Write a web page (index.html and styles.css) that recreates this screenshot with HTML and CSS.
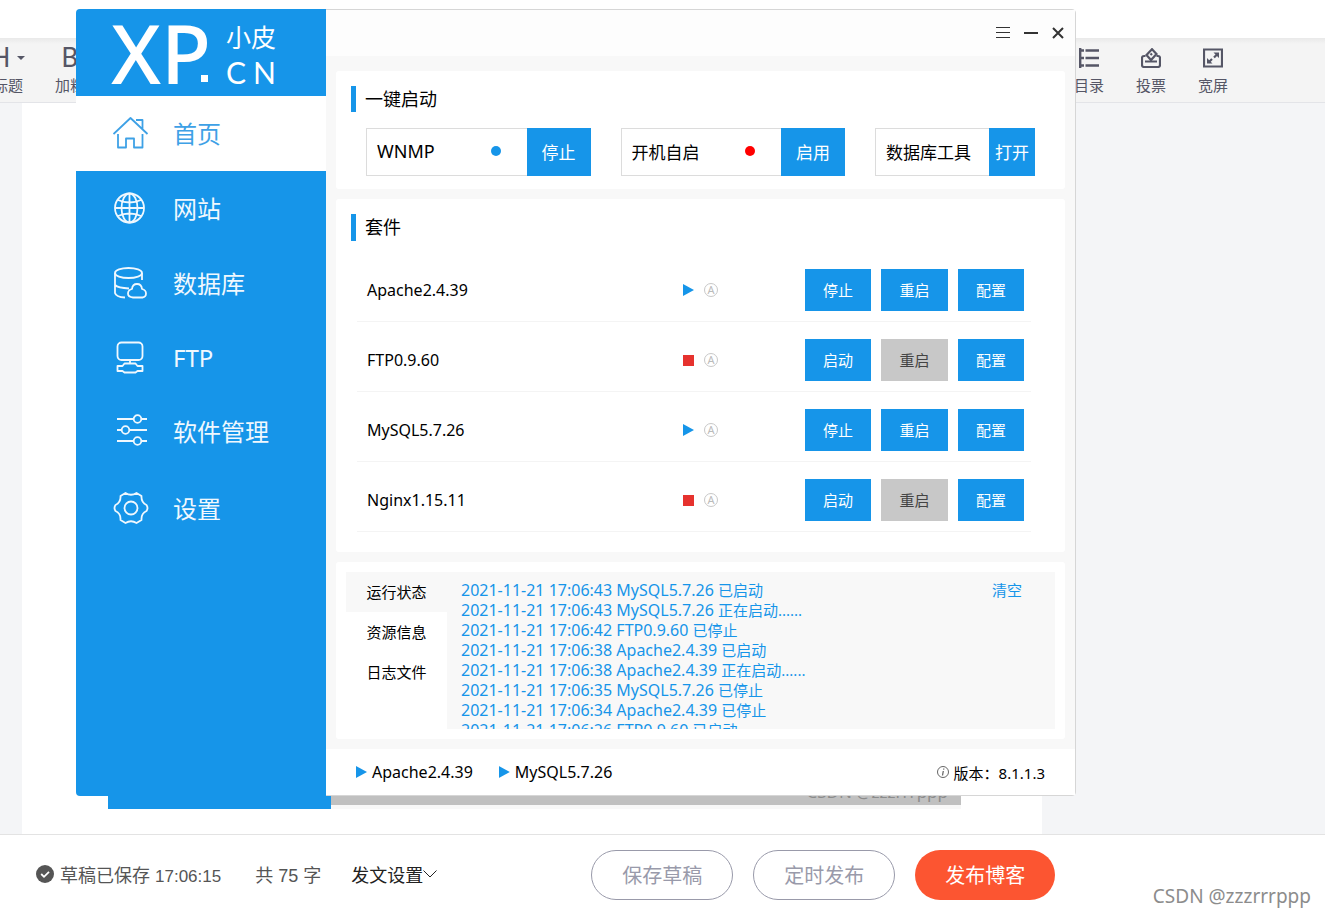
FILE: index.html
```html
<!DOCTYPE html>
<html lang="zh-CN">
<head>
<meta charset="utf-8">
<title>小皮面板</title>
<link rel="stylesheet" href="styles.css">
</head>
<body>
<div class="editor">
  <div class="editor-head"></div>
  <div class="toolbar">
    <button class="tool" type="button"><span class="tool-icon tool-letter">H<svg width="8" height="4" viewBox="0 0 8 4"><path d="M0 0h8L4 4z" fill="currentColor"/></svg></span><span>标题</span></button>
    <button class="tool" type="button"><span class="tool-icon tool-letter">B</span><span>加粗</span></button>
    <span class="spacer"></span>
    <button class="tool" type="button"><span class="tool-icon"><svg width="20" height="20" viewBox="0 0 20 20" fill="none" stroke="currentColor" stroke-width="2.4"><path d="M1.200 0v20M1 2.500h4M1 10h4M1 17.500h4M6.500 2.500H20M6.500 10H20M6.500 17.500H20"/></svg></span><span>目录</span></button>
    <button class="tool" type="button"><span class="tool-icon"><svg width="20" height="20" viewBox="0 0 20 20" fill="none" stroke="currentColor" stroke-width="2.2"><path d="M4.500 8H3Q1 8 1 10v7q0 2 2 2h14q2 0 2-2v-7q0-2-2-2h-1.500M4 13.500h12"/><path d="M5.500 7 11 1.200 15.500 6 10 12Z"/><path d="M9.500 7l1.500-1.500"/></svg></span><span>投票</span></button>
    <button class="tool" type="button"><span class="tool-icon"><svg width="20" height="20" viewBox="0 0 20 20" fill="none" stroke="currentColor" stroke-width="2.2"><path d="M1 1.500h18v17H1zM11 9.500l3.500-3.500M9 11l-3.500 3.500"/><path d="M10.500 4.500H16V10zM4 10v5.500h5.500z" fill="currentColor" stroke="none"/></svg></span><span>宽屏</span></button>
  </div>
  <main class="canvas">
    <article class="doc">
      <div class="shot"><div class="shot-side"></div><div class="shot-body"><span>CSDN @zzzrrrppp</span></div></div>
    </article>
  </main>
  <footer class="publish">
    <div class="status">
      <svg width="18" height="18" viewBox="0 0 18 18"><circle cx="9" cy="9" r="9" fill="#555"/><path d="M5.200 9l2.800 2.800 5-5" fill="none" stroke="#fff" stroke-width="1.800"/></svg>
      <span>草稿已保存 <time>17:06:15</time></span>
    </div>
    <span class="count">共 75 字</span>
    <button class="settings" type="button" aria-haspopup="true">发文设置<svg width="14" height="8" viewBox="0 0 14 8" fill="none" stroke="#222"><path d="M.5.5 7 7 13.500.5"/></svg></button>
    <div class="actions">
      <button class="pill" type="button">保存草稿</button>
      <button class="pill" type="button">定时发布</button>
      <button class="pill primary" type="button">发布博客</button>
    </div>
    <span class="mark">CSDN @zzzrrrppp</span>
  </footer>
</div>

<div class="window">
  <aside class="side">
    <div class="logo">
      <span class="logo-xp">XP</span><span class="logo-dot"></span>
      <span class="logo-name"><span class="logo-row"><b>小</b><b>皮</b></span><span class="logo-row logo-cn"><b>C</b><b>N</b></span></span>
    </div>
    <nav class="nav">
      <a class="active" href="#home"><svg width="36" height="34" viewBox="0 0 36 34"><path d="M.5 18 17.500 2l17 16M23 4h6.500v9M5 18v13.500h8v-9h8v9h8.500V18"/></svg>首页</a>
      <a href="#site"><svg width="36" height="34" viewBox="0 0 36 34"><circle cx="16.500" cy="17" r="14.500"/><ellipse cx="16.500" cy="17" rx="8" ry="14.500"/><path d="M16.500 2.500v29M2 17h29M5 9q11.500 5 23 0M5 25q11.500-5 23 0"/></svg>网站</a>
      <a href="#db"><svg width="36" height="34" viewBox="0 0 36 34"><ellipse cx="15.500" cy="7" rx="13.500" ry="5"/><path d="M2 7v20q1 4 10 4.500M29 7v7M2 19q3 3 14 3.500M20 31.500h9.500q3.500-.5 3.500-4t-4-4.500q-.5-5-5-5t-5 5q-4 1-4 4.500t5 4z"/></svg>数据库</a>
      <a href="#ftp"><svg width="36" height="34" viewBox="0 0 36 34"><rect x="4.500" y="1.500" width="25" height="17.500" rx="4"/><path d="M17 19v3.500M11.500 22.500h11l2 2.500h5v5h-5l-2 1.500h-11L9.500 30h-5v-5h5z"/></svg>FTP</a>
      <a class="soft" href="#soft"><svg width="36" height="34" viewBox="0 0 36 34"><path d="M4 6h16.500M28.500 6H34M4 17h4.500M16.500 17H34M4 28h16.500M28.500 28H34"/><circle cx="24.500" cy="6" r="3.800"/><circle cx="12.500" cy="17" r="3.800"/><circle cx="24.500" cy="28" r="3.800"/></svg>软件管理</a>
      <a class="set" href="#set"><svg width="36" height="34" viewBox="0 0 36 34"><circle cx="18" cy="17" r="6.500"/><path d="M12.500 2Q18 5.500 23.500 2l5 3q-.5 6.500 5 9 2 3 0 6-5.500 2.500-5 9l-5 3q-5.500-3.500-11 0l-5-3q.5-6.500-5-9-2-3 0-6 5.500-2.500 5-9z"/></svg>设置</a>
    </nav>
  </aside>
  <section class="panel">
    <header class="titlebar">
      <button type="button" aria-label="菜单"><svg width="14" height="12" viewBox="0 0 14 12" stroke="#333"><path d="M0 .5h14M0 5.500h14M0 10.500h14"/></svg></button>
      <button type="button" aria-label="最小化"><svg width="14" height="12" viewBox="0 0 14 12" stroke="#333" stroke-width="2"><path d="M0 6h14"/></svg></button>
      <button type="button" aria-label="关闭"><svg width="12" height="12" viewBox="0 0 12 12" stroke="#333" stroke-width="2"><path d="M1 1l10 10M11 1 1 11"/></svg></button>
    </header>
    <div class="cards">
      <section class="card">
        <h2>一键启动</h2>
        <div class="quick">
          <div class="group"><div class="field"><span class="latin">WNMP</span><i class="dot"></i></div><button type="button">停止</button></div>
          <div class="group"><div class="field"><span>开机自启</span><i class="dot red"></i></div><button type="button">启用</button></div>
          <div class="group tools"><div class="field"><span>数据库工具</span></div><button type="button">打开</button></div>
        </div>
      </section>
      <section class="card suite">
        <h2>套件</h2>
        <ul class="services">
          <li><span class="name">Apache2.4.39</span><i class="play"></i><i class="auto">A</i><span class="ops"><button type="button">停止</button><button type="button">重启</button><button type="button">配置</button></span></li>
          <li><span class="name">FTP0.9.60</span><i class="stop"></i><i class="auto">A</i><span class="ops"><button type="button">启动</button><button type="button" disabled>重启</button><button type="button">配置</button></span></li>
          <li><span class="name">MySQL5.7.26</span><i class="play"></i><i class="auto">A</i><span class="ops"><button type="button">停止</button><button type="button">重启</button><button type="button">配置</button></span></li>
          <li><span class="name">Nginx1.15.11</span><i class="stop"></i><i class="auto">A</i><span class="ops"><button type="button">启动</button><button type="button" disabled>重启</button><button type="button">配置</button></span></li>
        </ul>
      </section>
      <section class="card run">
        <div class="tabs"><button class="on" type="button">运行状态</button><button type="button">资源信息</button><button type="button">日志文件</button></div>
        <div class="log">
          <ol>
            <li>2021-11-21 17:06:43 MySQL5.7.26 <span>已启动</span></li>
            <li>2021-11-21 17:06:43 MySQL5.7.26 <span>正在启动......</span></li>
            <li>2021-11-21 17:06:42 FTP0.9.60 <span>已停止</span></li>
            <li>2021-11-21 17:06:38 Apache2.4.39 <span>已启动</span></li>
            <li>2021-11-21 17:06:38 Apache2.4.39 <span>正在启动......</span></li>
            <li>2021-11-21 17:06:35 MySQL5.7.26 <span>已停止</span></li>
            <li>2021-11-21 17:06:34 Apache2.4.39 <span>已停止</span></li>
            <li>2021-11-21 17:06:26 FTP0.9.60 <span>已启动</span></li>
          </ol>
          <button type="button">清空</button>
        </div>
      </section>
    </div>
    <footer class="bar">
      <span class="running"><i class="play"></i>Apache2.4.39</span>
      <span class="running"><i class="play"></i>MySQL5.7.26</span>
      <span class="version"><svg width="12" height="12" viewBox="0 0 12 12" fill="none" stroke="#666"><circle cx="6" cy="6" r="5.500"/><path d="M6.800 2.500l-.2 1.200M6.300 5 5.500 9.500" stroke-width="1.300"/></svg><span>版本：8.1.1.3</span></span>
    </footer>
  </section>
</div>
</body>
</html>
```
FILE: styles.css
```css
* { box-sizing: border-box; }
body { margin: 0; font-family: "Noto Sans", "Noto Sans CJK SC", sans-serif; color: #000; }
button { margin: 0; padding: 0; border: 0; background: none; font: inherit; color: inherit; }
h2, ul, ol { margin: 0; padding: 0; font-weight: 400; list-style: none; }
svg { flex: none; }
i, b { font-style: normal; font-weight: 400; }

.editor { display: flex; flex-direction: column; height: 100vh; min-height: 840px; overflow: hidden; font-family: "Liberation Sans", "Noto Sans CJK SC", sans-serif; background: #f4f5f7; }
.editor-head { flex: none; height: 38px; background: #fff; }
.toolbar { flex: none; display: flex; gap: 32px; height: 65px; padding: 8px 97px 0 0; margin-left: -7px; border-bottom: 1px solid #e3e4e8; background: linear-gradient(#e9e9e9, #f4f4f4 6px); font-size: 15px; color: #555666; }
.spacer { flex: 1; }
.tool { display: flex; flex-direction: column; align-items: center; width: 30px; gap: 6px; line-height: 20px; white-space: nowrap; }
.tool-icon { display: flex; align-items: center; justify-content: center; height: 24px; }
.tool-letter { gap: 7px; font-family: Roboto, sans-serif; font-size: 27px; }
.canvas { flex: 1; display: flex; min-height: 0; padding-left: 22px; }
.doc { display: flex; align-items: flex-end; width: 1020px; padding: 0 81px 25px 86px; background: #fff; }
.shot { flex: 1; display: flex; height: 60px; }
.shot-side { width: 223px; background: #1695e9; }
.shot-body { flex: 1; display: flex; align-items: flex-end; justify-content: flex-end; padding: 0 13px 1px 0; border-bottom: 4px solid #f8f8f8; background: #c0c0c0; color: #8c8c8c; font: 17px/24px "Noto Sans", sans-serif; }
.publish { flex: none; display: flex; align-items: center; height: 83px; padding: 0 14px 4px 36px; border-top: 1px solid #e3e3e3; background: #fff; font-size: 18px; color: #555; white-space: nowrap; }
.status { display: flex; align-items: center; gap: 6px; }
.status time { font-size: 17px; }
.count { margin: 0 30px 0 34px; }
.settings { display: flex; align-items: center; color: #222; }
.actions { display: flex; gap: 20px; margin-left: 154px; padding-top: 2px; font-size: 20px; }
.pill { width: 142px; height: 50px; padding-bottom: 2px; border: 1px solid #999aaa; border-radius: 25px; color: #999aaa; }
.primary { width: 140px; border: 0; background: #fc5531; color: #fff; }
.mark { align-self: flex-end; margin-left: auto; padding-bottom: 4px; font: 19px/26px "Noto Sans", sans-serif; color: #8c8c8c; }

.window { position: absolute; top: 9px; left: 76px; display: flex; width: 1000px; border-radius: 4px; overflow: hidden; }
.side { flex: none; width: 250px; background: #1695e9; color: #fff; }
.logo { display: flex; height: 87px; padding: 0 50px 0 35px; }
.logo-xp { font-size: 82px; line-height: 86px; font-weight: 500; }
.logo-dot { align-self: flex-end; flex: none; width: 7px; height: 7px; margin: 0 0 14px -10px; background: #fff; }
.logo-name { display: flex; flex-direction: column; width: 50px; margin-left: auto; padding-top: 11px; font-size: 25px; line-height: 34px; }
.logo-row { display: flex; justify-content: space-between; }
.logo-cn { font-family: Lato, sans-serif; font-size: 30px; line-height: 36px; }
.nav a { display: flex; align-items: center; gap: 24px; height: 75px; padding: 0 0 2px 37px; font-size: 24px; color: #f0f8fe; text-decoration: none; }
.nav .soft { height: 70px; }
.nav .set { height: 85px; }
.nav svg { fill: none; stroke: currentColor; stroke-width: 1.8; stroke-linejoin: round; }
.nav .active { background: #fff; color: #3ea1e6; }

.panel { flex: 1; display: flex; flex-direction: column; border: 1px solid #d6d6d6; border-left: 0; border-radius: 0 4px 4px 0; background: #f8f8f8; }
.titlebar { display: flex; align-items: center; justify-content: flex-end; gap: 14px; height: 46px; padding-right: 11px; background: #fdfdfd; }
.titlebar button { display: flex; }
.cards { display: flex; flex-direction: column; gap: 10px; padding: 15px 10px 10px; }
.card { padding: 15px 15px 13px; border-radius: 3px; background: #fff; }
.card h2 { padding-left: 9px; border-left: 5px solid #1695e9; font-size: 18px; line-height: 26px; }
.quick { display: flex; gap: 30px; padding: 16px 15px 0; font-size: 17px; }
.group { flex: 1; display: flex; height: 48px; }
.tools { flex: none; width: 160px; }
.field { flex: 1; display: flex; align-items: center; justify-content: space-between; padding: 0 26px 2px 10px; border: 1px solid #dcdcdc; border-right: 0; white-space: nowrap; }
.tools .field { padding-right: 10px; }
.latin { font-size: 18px; }
.dot { width: 10px; height: 10px; border-radius: 50%; background: #1695e9; }
.red { background: #f00; }
.group button { width: 64px; padding-bottom: 1px; background: #1695e9; color: #fff; }
.tools button { width: 46px; }
.suite { padding-bottom: 20px; }
.suite h2 { line-height: 27px; }
.services { padding: 11px 19px 0 6px; }
.services li { display: flex; align-items: center; height: 70px; padding: 17px 7px 10px 10px; border-bottom: 1px solid #f4f4f4; }
.name { flex: 1; font-size: 16px; }
.play { width: 11px; height: 12px; background: #1695e9; clip-path: polygon(0 0, 100% 50%, 0 100%); }
.stop { width: 11px; height: 11px; background: #e6322e; }
.auto { width: 14px; height: 14px; margin: 0 87px 0 10px; border: 1px solid #c8c8c8; border-radius: 50%; font-size: 11px; line-height: 12px; text-align: center; color: #bbb; }
.ops { display: flex; gap: 10px; font-size: 15px; }
.ops button { width: 66px; height: 42px; padding-bottom: 1px; background: #1695e9; color: #fff; }
.ops button:nth-child(2) { width: 67px; }
.ops button:disabled { background: #c8c8c8; color: #444; }
.run { display: flex; height: 177px; padding: 10px; }
.tabs { width: 101px; font-size: 15px; }
.tabs button { display: block; width: 100%; height: 40px; padding-bottom: 2px; }
.tabs .on { background: #f8f8f8; }
.log { flex: 1; display: flex; justify-content: space-between; align-items: flex-start; overflow: hidden; padding: 8px 33px 0 14px; background: #f8f8f8; color: #1695e9; font-size: 16px; line-height: 20px; }
.log li { height: 20px; }
.log span, .log button { font-size: 15px; }
.bar { display: flex; align-items: center; gap: 26px; height: 46px; padding: 0 30px; background: #fff; font-size: 16px; }
.running, .version { display: flex; align-items: center; gap: 5px; }
.version { margin-left: auto; font-size: 15px; }
```
